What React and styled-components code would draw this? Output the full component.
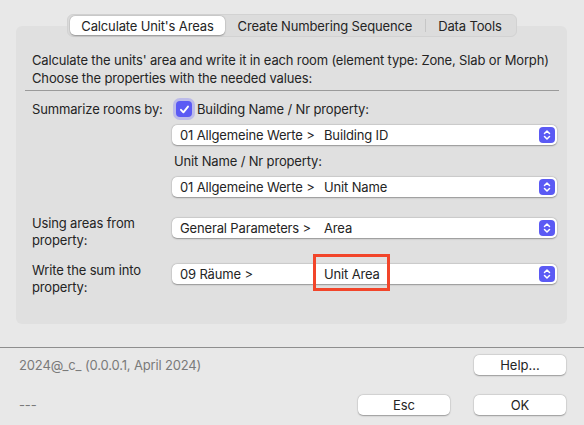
import React from 'react';
import styled, { createGlobalStyle } from 'styled-components';

const GlobalStyle = createGlobalStyle`
  html, body {
    margin: 0;
    padding: 0;
    background: #e8e8e8;
  }
  body {
    font-family: Inter, "Liberation Sans", sans-serif;
    font-size: 13px;
    letter-spacing: -0.15px;
    color: #242424;
    -webkit-font-smoothing: antialiased;
  }
`;

const Window = styled.div`
  width: 584px;
  height: 425px;
  background: #e8e8e8;
  overflow: hidden;
  display: flex;
  flex-direction: column;
`;

const TabBar = styled.div`
  position: relative;
  z-index: 1;
  align-self: center;
  margin-top: 14px;
  height: 23px;
  display: flex;
  align-items: center;
  padding: 0 2px;
  background: #dcdcdc;
  border: 1px solid #d2d2d2;
  border-radius: 6px;
  box-sizing: border-box;
`;

const Tab = styled.div`
  display: flex;
  align-items: center;
  padding: 0 ${({ $pad }) => $pad}px;
  white-space: nowrap;
  background: ${({ $active }) => ($active ? '#ffffff' : 'transparent')};
  box-shadow: ${({ $active }) =>
    $active ? '0 0.5px 1.5px rgba(0,0,0,0.3), 0 0 0 0.5px rgba(0,0,0,0.06)' : 'none'};
  border-right: ${({ $sep }) => ($sep ? '1px solid #c6c6c6' : 'none')};
  border-radius: ${({ $sep }) => ($sep ? '0' : '5px')};
  height: ${({ $sep }) => ($sep ? '13px' : '19px')};
`;

const Panel = styled.div`
  margin: -11px 17px 0 16px;
  height: 298px;
  box-sizing: border-box;
  background: #e0e0e0;
  border-radius: 6px;
  padding: 25px 10px 0 16px;
`;

const Description = styled.div`
  line-height: 18px;
  white-space: nowrap;
  overflow: hidden;
  width: 521px;
`;

const Rule = styled.div`
  height: 1px;
  background: #9a9a9a;
  margin: 3px -2px 0 -7px;
`;

const Form = styled.div`
  display: grid;
  grid-template-columns: 140px 1fr;
  align-items: start;
  margin-top: 10px;
`;

const Label = styled.div`
  line-height: 17px;
  margin-top: ${({ $top }) => $top || 0}px;
`;

const Column = styled.div`
  display: flex;
  flex-direction: column;
  gap: 8px;
  margin-bottom: ${({ $gap }) => $gap || 0}px;
`;

const CheckRow = styled.label`
  display: flex;
  align-items: center;
  gap: 5px;
  height: 16px;
  margin-left: 4px;
`;

const CheckBox = styled.span`
  width: 16px;
  height: 16px;
  border-radius: 4px;
  background: #5b5af4;
  box-shadow: 0 0 0 3px rgba(120, 118, 250, 0.35);
  display: flex;
  align-items: center;
  justify-content: center;
`;

const SubLabel = styled.div`
  line-height: 16px;
  margin-left: 2px;
`;

const Select = styled.div`
  position: relative;
  height: 20px;
  background: #ffffff;
  border-radius: 5px;
  box-shadow: 0 0.5px 1.5px rgba(0, 0, 0, 0.32), 0 0 0 0.5px rgba(0, 0, 0, 0.06);
  display: flex;
  align-items: center;
  padding: 0 2px 0 8px;
`;

const Group = styled.span`
  width: 144px;
  flex: none;
  white-space: nowrap;
`;

const Value = styled.span`
  flex: 1;
  white-space: nowrap;
`;

const Stepper = styled.span`
  width: 16px;
  height: 16px;
  border-radius: 4px;
  background: #5b5af4;
  display: flex;
  align-items: center;
  justify-content: center;
`;

const Highlight = styled.div`
  position: absolute;
  left: 141px;
  top: -10px;
  width: 77px;
  height: 37px;
  box-sizing: border-box;
  border: 3px solid #f2452a;
  pointer-events: none;
`;

const Footer = styled.div`
  margin-top: 23px;
  border-top: 1px solid #8e8e8e;
  display: grid;
  grid-template-columns: 1fr 92px 92px;
  grid-template-rows: 20px 20px;
  column-gap: 24px;
  row-gap: 20px;
  align-items: center;
  padding: 7px 18px 0 19px;
`;

const Note = styled.div`
  color: #7a7a7a;
  grid-column: ${({ $span }) => $span};
`;

const Button = styled.button`
  font: inherit;
  color: #242424;
  height: 20px;
  border: none;
  border-radius: 5px;
  background: #ffffff;
  box-shadow: 0 0.5px 1.5px rgba(0, 0, 0, 0.32), 0 0 0 0.5px rgba(0, 0, 0, 0.06);
  padding: 0;
  grid-column: ${({ $col }) => $col};
`;

const Check = () => (
  <svg width="11" height="11" viewBox="0 0 11 11">
    <path d="M2 5.8 L4.4 8.3 L9 2.6" fill="none" stroke="#fff" strokeWidth="1.9" strokeLinecap="round" strokeLinejoin="round" />
  </svg>
);

const Arrows = () => (
  <svg width="8" height="12" viewBox="0 0 8 12">
    <path d="M1.5 4.5 L4 2 L6.5 4.5 M1.5 7.5 L4 10 L6.5 7.5" fill="none" stroke="#fff" strokeWidth="1.5" strokeLinecap="round" strokeLinejoin="round" />
  </svg>
);

const PropSelect = ({ group, value, children }) => (
  <Select>
    <Group>{group}</Group>
    <Value>{value}</Value>
    <Stepper>
      <Arrows />
    </Stepper>
    {children}
  </Select>
);

export default function App() {
  return (
    <>
      <GlobalStyle />
      <Window>
        <TabBar>
          <Tab $active $pad={11}>Calculate Unit's Areas</Tab>
          <Tab $sep $pad={13}>Create Numbering Sequence</Tab>
          <Tab $pad={12}>Data Tools</Tab>
        </TabBar>

        <Panel>
          <Description>
            Calculate the units' area and write it in each room (element type: Zone, Slab or Morph)
            <br />
            Choose the properties with the needed values:
          </Description>
          <Rule />

          <Form>
            <Label>Summarize rooms by:</Label>
            <Column $gap={21}>
              <CheckRow>
                <CheckBox>
                  <Check />
                </CheckBox>
                Building Name / Nr property:
              </CheckRow>
              <PropSelect group="01 Allgemeine Werte >" value="Building ID" />
              <SubLabel>Unit Name / Nr property:</SubLabel>
              <PropSelect group="01 Allgemeine Werte >" value="Unit Name" />
            </Column>

            <Label $top={-3}>
              Using areas from
              <br />
              property:
            </Label>
            <Column $gap={26}>
              <PropSelect group="General Parameters >" value="Area" />
            </Column>

            <Label $top={-2}>
              Write the sum into
              <br />
              property:
            </Label>
            <Column>
              <PropSelect group="09 Räume >" value="Unit Area">
                <Highlight />
              </PropSelect>
            </Column>
          </Form>
        </Panel>

        <Footer>
          <Note $span="1 / 3">2024@_c_ (0.0.0.1, April 2024)</Note>
          <Button $col="3">Help...</Button>
          <Note $span="1 / 2">---</Note>
          <Button $col="2">Esc</Button>
          <Button $col="3">OK</Button>
        </Footer>
      </Window>
    </>
  );
}
